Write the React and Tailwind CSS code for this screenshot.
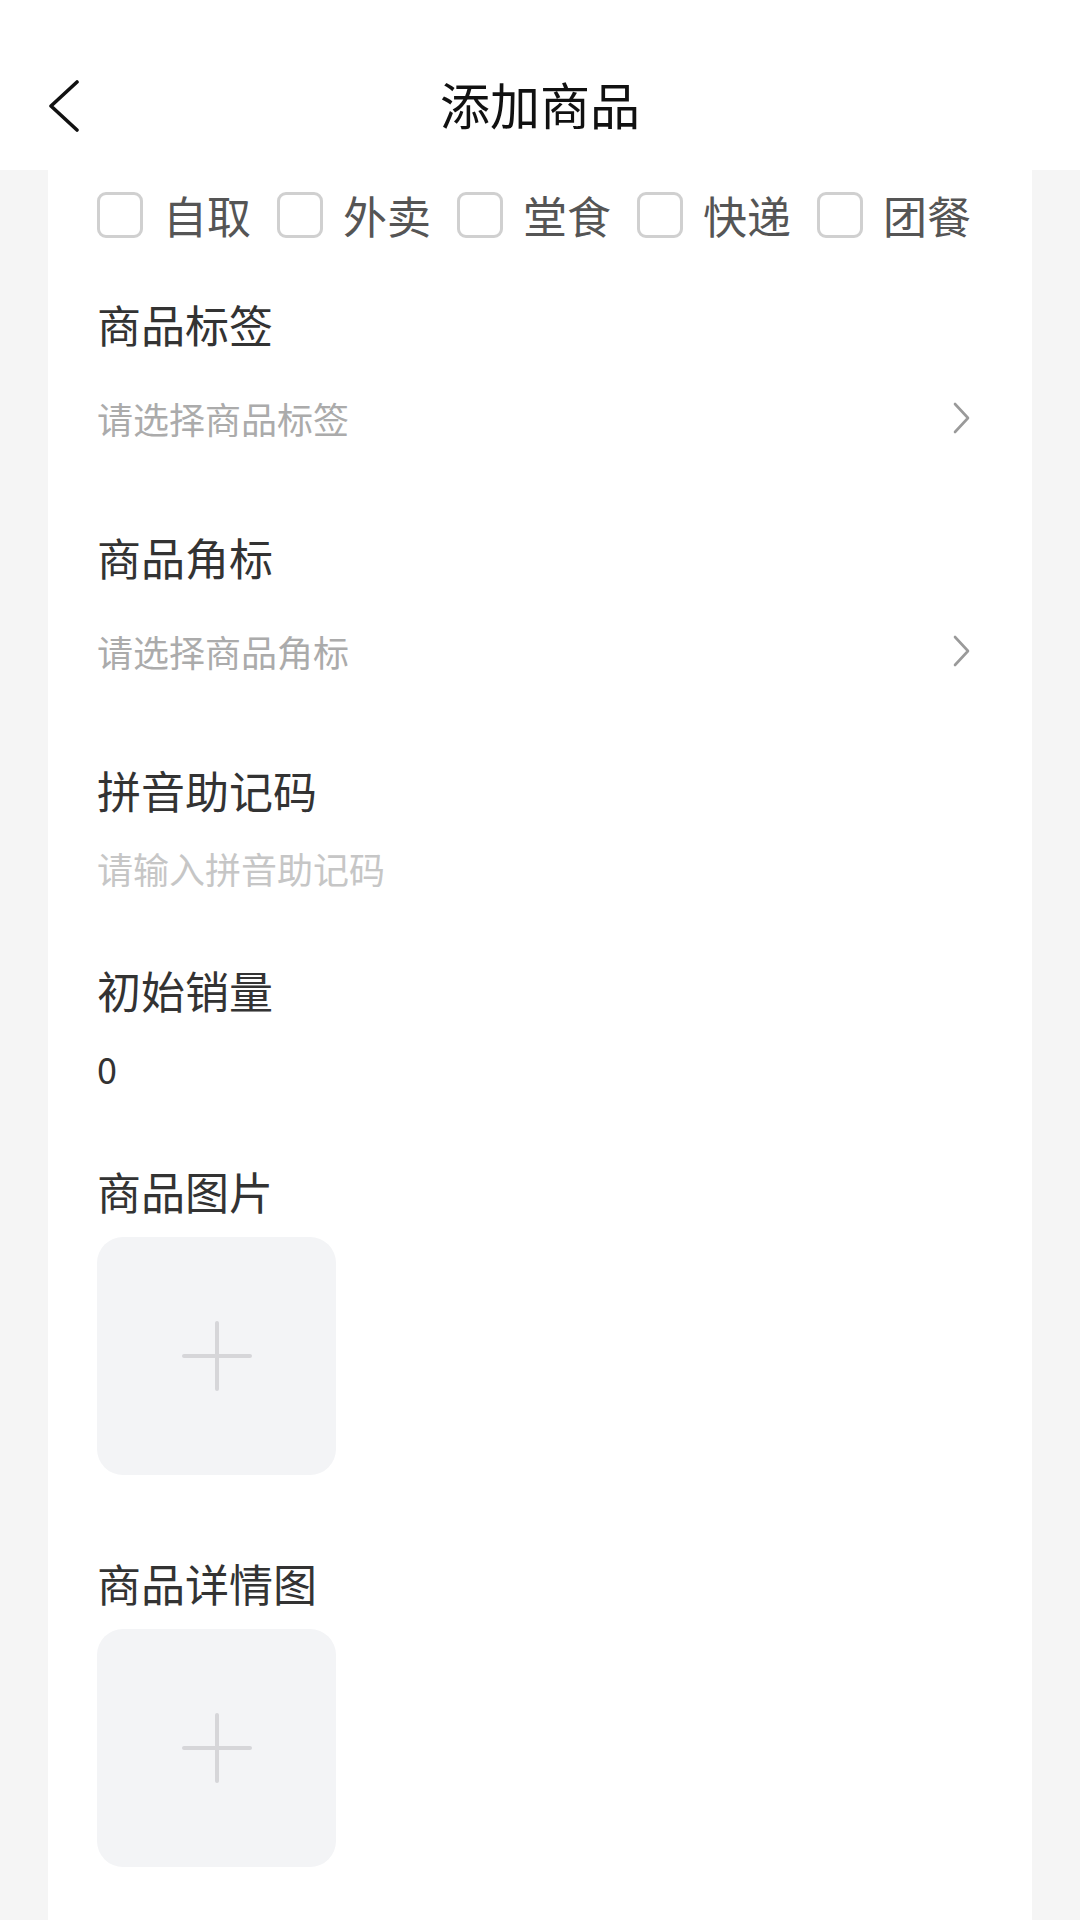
import React from 'react';

const font = { fontFamily: '"Noto Sans CJK SC", "Noto Sans", sans-serif' };

function ChevronRight() {
  return (
    <svg width="20" height="32" viewBox="0 0 20 32" fill="none">
      <path d="M3 2 L16 16 L3 30" stroke="#9a9a9a" strokeWidth="2.6" strokeLinecap="round" strokeLinejoin="round" />
    </svg>
  );
}

function Check({ label }) {
  return (
    <div className="flex items-center">
      <span className="w-[46px] h-[46px] rounded-[9px] border-[3px] border-[#d0d0d0] bg-white" />
      <span className="ml-[20px] text-[44px] leading-[46px] text-[#555]">{label}</span>
    </div>
  );
}

function Title({ children, className = '' }) {
  return <div className={`text-[44px] leading-[60px] text-[#333] ${className}`}>{children}</div>;
}

function Picker({ placeholder, className = '' }) {
  return (
    <div className={`flex items-center justify-between pr-[12px] ${className}`}>
      <span className="text-[36px] leading-[50px] text-[#ababab]">{placeholder}</span>
      <ChevronRight />
    </div>
  );
}

function Upload({ className = '' }) {
  return (
    <div className={`w-[239px] h-[238px] rounded-[26px] bg-[#f3f4f6] flex items-center justify-center ${className}`}>
      <svg width="70" height="70" viewBox="0 0 70 70">
        <path d="M35 2 V68 M2 35 H68" stroke="#d6d6d9" strokeWidth="4" strokeLinecap="round" />
      </svg>
    </div>
  );
}

export default function App() {
  return (
    <div className="w-[1080px] h-[1920px] bg-[#f5f5f5] overflow-hidden flex flex-col" style={font}>
      {/* Header */}
      <header className="h-[170px] bg-white relative flex items-end justify-center pb-[36px] shrink-0">
        <button className="absolute left-[46px] top-[80px]">
          <svg width="36" height="52" viewBox="0 0 36 52" fill="none">
            <path d="M31 2 L5 26 L31 50" stroke="#111" strokeWidth="3.6" strokeLinecap="round" strokeLinejoin="round" />
          </svg>
        </button>
        <h1 className="text-[50px] leading-[62px] text-[#111]">添加商品</h1>
      </header>

      {/* Form card */}
      <main className="mx-[48px] flex-1 bg-white pl-[49px] pr-[48px] pt-[22px]">
        <div className="flex items-center gap-[26px]">
          <Check label="自取" />
          <Check label="外卖" />
          <Check label="堂食" />
          <Check label="快递" />
          <Check label="团餐" />
        </div>

        <Title className="mt-[56px]">商品标签</Title>
        <Picker placeholder="请选择商品标签" className="mt-[39px]" />

        <Title className="mt-[84px]">商品角标</Title>
        <Picker placeholder="请选择商品角标" className="mt-[39px]" />

        <Title className="mt-[84px]">拼音助记码</Title>
        <div className="mt-[23px] text-[36px] leading-[50px] text-[#c6c6c6]">请输入拼音助记码</div>

        <Title className="mt-[67px]">初始销量</Title>
        <div className="mt-[23px] text-[36px] leading-[50px] text-[#333]">0</div>

        <Title className="mt-[68px]">商品图片</Title>
        <Upload className="mt-[16px]" />

        <Title className="mt-[78px]">商品详情图</Title>
        <Upload className="mt-[16px]" />
      </main>
    </div>
  );
}
